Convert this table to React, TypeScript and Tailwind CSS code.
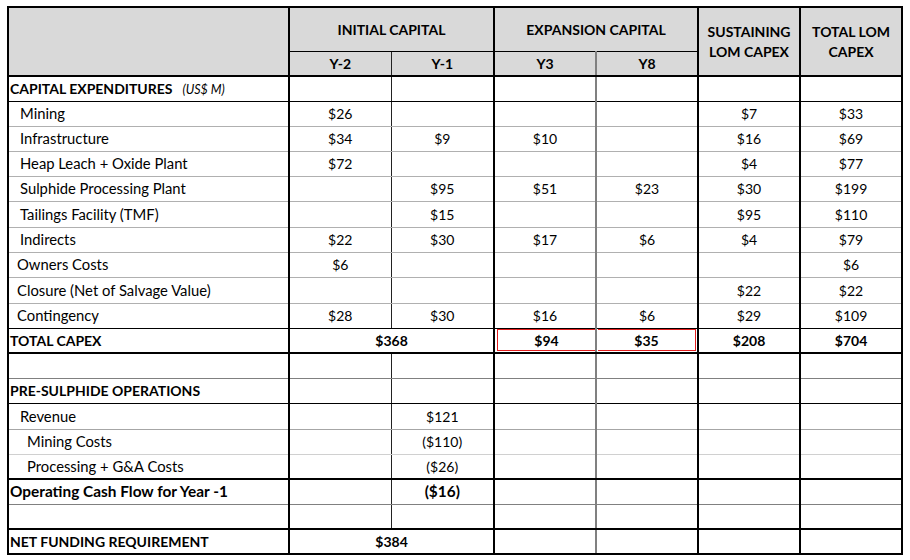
import React from "react";

type Row = {
  label?: string;
  note?: string;
  pad: string;
  bold?: boolean;
  vals?: string[];
  span?: string;
  bottom: string;
  h: string;
  red?: boolean;
  big?: boolean;
};

const rows: Row[] = [
  { label: "CAPITAL EXPENDITURES", note: "(US$ M)", pad: "pl-[1px]", bold: true, bottom: "border-b border-b-black", h: "h-[25px]" },
  { label: "Mining", pad: "pl-[11px]", vals: ["$26", "", "", "", "$7", "$33"], bottom: "border-b border-b-[#b0b0b0]", h: "h-[25px]" },
  { label: "Infrastructure", pad: "pl-[11px]", vals: ["$34", "$9", "$10", "", "$16", "$69"], bottom: "border-b border-b-[#b0b0b0]", h: "h-[25px]" },
  { label: "Heap Leach + Oxide Plant", pad: "pl-[11px]", vals: ["$72", "", "", "", "$4", "$77"], bottom: "border-b border-b-[#b0b0b0]", h: "h-[25px]" },
  { label: "Sulphide Processing Plant", pad: "pl-[11px]", vals: ["", "$95", "$51", "$23", "$30", "$199"], bottom: "border-b border-b-[#b0b0b0]", h: "h-[25px]" },
  { label: "Tailings Facility (TMF)", pad: "pl-[11px]", vals: ["", "$15", "", "", "$95", "$110"], bottom: "border-b border-b-[#b0b0b0]", h: "h-[26px]" },
  { label: "Indirects", pad: "pl-[11px]", vals: ["$22", "$30", "$17", "$6", "$4", "$79"], bottom: "border-b border-b-[#b0b0b0]", h: "h-[25px]" },
  { label: "Owners Costs", pad: "pl-[8px]", vals: ["$6", "", "", "", "", "$6"], bottom: "border-b border-b-[#b0b0b0]", h: "h-[25px]" },
  { label: "Closure (Net of Salvage Value)", pad: "pl-[8px]", vals: ["", "", "", "", "$22", "$22"], bottom: "border-b border-b-[#b0b0b0]", h: "h-[26px]" },
  { label: "Contingency", pad: "pl-[8px]", vals: ["$28", "$30", "$16", "$6", "$29", "$109"], bottom: "border-b border-b-black", h: "h-[25px]" },
  { label: "TOTAL CAPEX", pad: "pl-[1px]", bold: true, span: "$368", vals: ["$94", "$35", "$208", "$704"], bottom: "border-b-2 border-b-black", h: "h-[25px]", red: true },
  { pad: "", bottom: "border-b border-b-[#808080]", h: "h-[25px]" },
  { label: "PRE-SULPHIDE OPERATIONS", pad: "pl-[1px]", bold: true, bottom: "border-b border-b-black", h: "h-[25px]" },
  { label: "Revenue", pad: "pl-[11px]", vals: ["", "$121", "", "", "", ""], bottom: "border-b border-b-[#a6a6a6]", h: "h-[26px]" },
  { label: "Mining Costs", pad: "pl-[18px]", vals: ["", "($110)", "", "", "", ""], bottom: "border-b border-b-[#d0d0d0]", h: "h-[25px]" },
  { label: "Processing + G&A Costs", pad: "pl-[18px]", vals: ["", "($26)", "", "", "", ""], bottom: "border-b-2 border-b-black", h: "h-[25px]" },
  { label: "Operating Cash Flow for Year -1", pad: "pl-[1px]", bold: true, big: true, vals: ["", "($16)", "", "", "", ""], bottom: "border-b border-b-[#808080]", h: "h-[25px]" },
  { pad: "", bottom: "border-b-2 border-b-black", h: "h-[25px]" },
  { label: "NET FUNDING REQUIREMENT", pad: "pl-[1px]", bold: true, span: "$384", vals: ["", "", "", ""], bottom: "border-b-2 border-b-black", h: "h-[25px]" },
];

// left border of each data column
const colLeft = [
  "border-l-2 border-l-black",
  "border-l border-l-[#222]",
  "border-l-2 border-l-black",
  "border-l-2 border-l-[#808080]",
  "border-l-2 border-l-black",
  "border-l-2 border-l-black border-r-2 border-r-black",
];

function DataRow({ row }: { row: Row }) {
  const vals = row.vals ?? ["", "", "", "", "", ""];
  const weight = row.bold ? "font-bold" : "font-normal";
  const labelSize = row.big ? "text-[15.4px]" : row.bold ? "text-[14px]" : "text-[14.8px]";
  const valSize = row.big ? "text-[15.4px]" : "text-[14px]";
  return (
    <tr className={row.h}>
      <td className={`border-l-2 border-l-black ${row.bottom} ${row.pad} ${weight} ${labelSize} whitespace-nowrap p-0`}>
        {row.label}
        {row.note && <span className="ml-[10px] text-[12.5px] font-normal italic">{row.note}</span>}
      </td>
      {row.span !== undefined ? (
        <>
          <td colSpan={2} className={`${colLeft[0]} ${row.bottom} text-center font-bold p-0`}>
            {row.span}
          </td>
          {vals.map((v, i) => {
            const idx = i + 2;
            let inner: React.ReactNode = v;
            if (row.red && idx === 2)
              inner = <div className="ml-[2px] flex h-[22px] items-center justify-center border-y border-l border-[#e21d1d]">{v}</div>;
            if (row.red && idx === 3)
              inner = <div className="ml-[1px] mr-[1px] flex h-[22px] items-center justify-center border-y border-r border-[#e21d1d]">{v}</div>;
            return (
              <td key={i} className={`${colLeft[idx]} ${row.bottom} text-center font-bold p-0`}>
                {inner}
              </td>
            );
          })}
        </>
      ) : (
        vals.map((v, i) => (
          <td key={i} className={`${colLeft[i]} ${row.bottom} ${weight} ${valSize} text-center p-0`}>
            {v}
          </td>
        ))
      )}
    </tr>
  );
}

export default function App() {
  return (
    <div className="min-h-[560px] w-[910px] bg-white pl-[7px] pt-[6px] text-[14px] text-black" style={{ fontFamily: "Lato, 'Open Sans', sans-serif" }}>
      <table className="w-[896px] table-fixed border-collapse">
        <colgroup>
          <col className="w-[281px]" />
          <col className="w-[102px]" />
          <col className="w-[103px]" />
          <col className="w-[102px]" />
          <col className="w-[102px]" />
          <col className="w-[102px]" />
          <col className="w-[102px]" />
        </colgroup>
        <thead>
          <tr className="h-[44px] font-bold">
            <td rowSpan={2} className="border-2 border-black bg-[#d9d9d9] p-0" />
            <td colSpan={2} className="border-t-2 border-l-2 border-b border-black bg-[#d9d9d9] p-0 text-center">INITIAL CAPITAL</td>
            <td colSpan={2} className="border-t-2 border-l-2 border-b border-black bg-[#d9d9d9] p-0 text-center">EXPANSION CAPITAL</td>
            <td rowSpan={2} className="border-t-2 border-l-2 border-b-2 border-black bg-[#d9d9d9] p-0 text-center leading-[20px]">
              SUSTAINING
              <br />
              LOM CAPEX
            </td>
            <td rowSpan={2} className="border-2 border-black bg-[#d9d9d9] p-0 text-center leading-[20px]">
              TOTAL LOM
              <br />
              CAPEX
            </td>
          </tr>
          <tr className="h-[25px] font-bold">
            <td className="border-l-2 border-b-2 border-black bg-[#d9d9d9] p-0 text-center">Y-2</td>
            <td className="border-l border-l-[#222] border-b-2 border-b-black bg-[#d9d9d9] p-0 text-center">Y-1</td>
            <td className="border-l-2 border-b-2 border-black bg-[#d9d9d9] p-0 text-center">Y3</td>
            <td className="border-l-2 border-l-[#808080] border-b-2 border-b-black bg-[#d9d9d9] p-0 text-center">Y8</td>
          </tr>
        </thead>
        <tbody>
          {rows.map((r, i) => (
            <DataRow key={i} row={r} />
          ))}
        </tbody>
      </table>
    </div>
  );
}
